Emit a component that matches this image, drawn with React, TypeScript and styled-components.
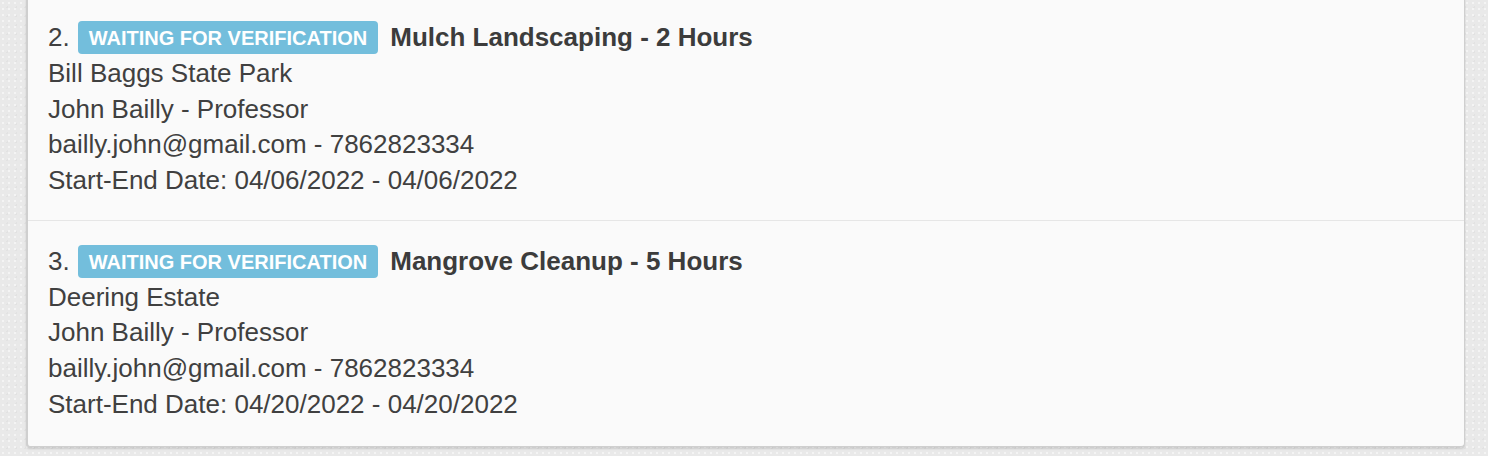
import styled, { createGlobalStyle } from 'styled-components';

const GlobalStyle = createGlobalStyle`
  html, body {
    margin: 0;
    padding: 0;
  }
  body {
    height: 456px;
    overflow: hidden;
    background-color: #e9e9e9;
    background-image:
      radial-gradient(rgba(255, 255, 255, 0.5) 1px, transparent 1px),
      radial-gradient(rgba(0, 0, 0, 0.03) 1px, transparent 1px);
    background-size: 6px 6px, 9px 9px;
    background-position: 0 0, 3px 3px;
    font-family: 'Liberation Sans', Arial, sans-serif;
  }
`;

const Panel = styled.div`
  margin: -3px 23px 0 26px;
  background: #fafafa;
  border: 1px solid #cfcfcf;
  border-left-width: 2px;
  border-top: none;
  border-radius: 0 0 4px 4px;
  box-shadow: 0 2px 2px rgba(0, 0, 0, 0.12);
`;

const Item = styled.div`
  padding: 23px 20px 21px;
  color: #404040;
  font-size: 26px;
  line-height: 35.75px;

  & + & {
    border-top: 1px solid #e6e6e6;
  }

  &:last-child {
    padding-bottom: 23px;
  }
`;

const Heading = styled.div`
  display: flex;
  align-items: center;
  height: 35.75px;
`;

const Label = styled.span`
  display: inline-flex;
  align-items: center;
  height: 33px;
  margin: 0 12px 0 8px;
  padding: 1px 11px 0;
  box-sizing: border-box;
  border-radius: 4px;
  background: #73bedc;
  color: #fff;
  font-size: 20px;
  font-weight: bold;
  text-transform: uppercase;
  line-height: 1;
`;

const Title = styled.strong`
  font-size: 26px;
  color: #3c3c3c;
`;

interface Entry {
  n: number;
  title: string;
  place: string;
  contact: string;
  email: string;
  phone: string;
  start: string;
  end: string;
}

const entries: Entry[] = [
  {
    n: 2,
    title: 'Mulch Landscaping - 2 Hours',
    place: 'Bill Baggs State Park',
    contact: 'John Bailly - Professor',
    email: 'bailly.john@gmail.com',
    phone: '7862823334',
    start: '04/06/2022',
    end: '04/06/2022',
  },
  {
    n: 3,
    title: 'Mangrove Cleanup - 5 Hours',
    place: 'Deering Estate',
    contact: 'John Bailly - Professor',
    email: 'bailly.john@gmail.com',
    phone: '7862823334',
    start: '04/20/2022',
    end: '04/20/2022',
  },
];

export default function App() {
  return (
    <>
      <GlobalStyle />
      <Panel>
        {entries.map((e) => (
          <Item key={e.n}>
            <Heading>
              {e.n}.<Label>Waiting for verification</Label>
              <Title>{e.title}</Title>
            </Heading>
            <div>{e.place}</div>
            <div>{e.contact}</div>
            <div>
              {e.email} - {e.phone}
            </div>
            <div>
              Start-End Date: {e.start} - {e.end}
            </div>
          </Item>
        ))}
      </Panel>
    </>
  );
}
